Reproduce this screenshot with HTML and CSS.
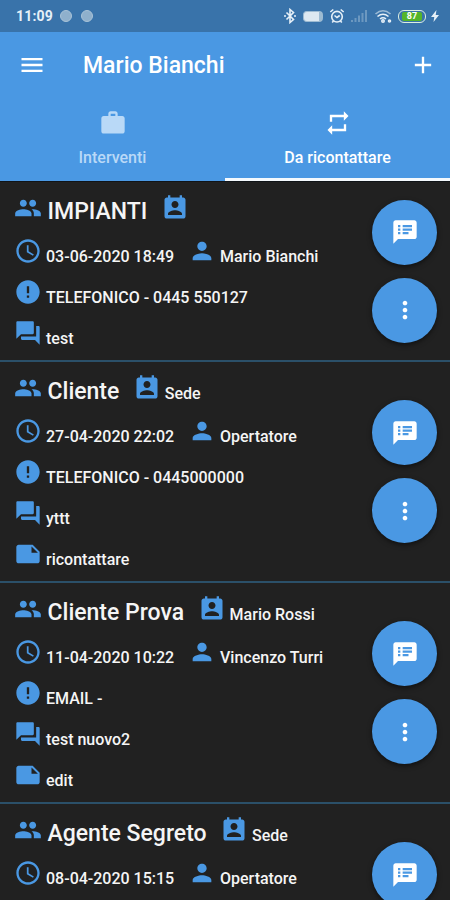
FILE: index.html
```html
<!DOCTYPE html>
<html lang="it">
<head>
    <meta charset="UTF-8">
    <meta name="viewport" content="width=device-width, initial-scale=1.0">
    <title>Da ricontattare</title>
    <link rel="stylesheet" href="styles.css">
</head>
<body>
    <svg class="sprite" aria-hidden="true">
        <symbol id="people" viewBox="0 0 24 24"><path d="M16 11c1.66 0 2.99-1.34 2.99-3S17.66 5 16 5c-1.66 0-3 1.34-3 3s1.34 3 3 3zm-8 0c1.66 0 2.99-1.34 2.99-3S9.66 5 8 5C6.34 5 5 6.34 5 8s1.34 3 3 3zm0 2c-2.33 0-7 1.17-7 3.5V19h14v-2.5c0-2.33-4.67-3.5-7-3.5zm8 0c-.29 0-.62.02-.97.05 1.16.84 1.97 1.97 1.97 3.45V19h6v-2.5c0-2.33-4.67-3.5-7-3.5z"/></symbol>
        <symbol id="contact" viewBox="0 0 24 24"><path d="M19 3h-1V1h-2v2H8V1H6v2H5c-1.11 0-2 .9-2 2v14c0 1.1.89 2 2 2h14c1.1 0 2-.9 2-2V5c0-1.1-.9-2-2-2zm-7 3c1.66 0 3 1.34 3 3s-1.34 3-3 3-3-1.34-3-3 1.34-3 3-3zm6 12H6v-1c0-2 4-3.1 6-3.1s6 1.1 6 3.1v1z"/></symbol>
        <symbol id="clock" viewBox="0 0 24 24"><path d="M11.99 2C6.47 2 2 6.48 2 12s4.47 10 9.99 10C17.52 22 22 17.52 22 12S17.52 2 11.99 2zM12 20c-4.42 0-8-3.58-8-8s3.58-8 8-8 8 3.58 8 8-3.58 8-8 8zm.5-13H11v6l5.25 3.15.75-1.23-4.5-2.67z"/></symbol>
        <symbol id="person" viewBox="0 0 24 24"><path d="M12 12c2.21 0 4-1.79 4-4s-1.79-4-4-4-4 1.79-4 4 1.79 4 4 4zm0 2c-2.67 0-8 1.34-8 4v2h16v-2c0-2.66-5.33-4-8-4z"/></symbol>
        <symbol id="error" viewBox="0 0 24 24"><path d="M12 2C6.48 2 2 6.48 2 12s4.48 10 10 10 10-4.48 10-10S17.52 2 12 2zm1 15h-2v-2h2v2zm0-4h-2V7h2v6z"/></symbol>
        <symbol id="forum" viewBox="0 0 24 24"><path d="M21 6h-2v9H6v2c0 .55.45 1 1 1h11l4 4V7c0-.55-.45-1-1-1zm-4 6V3c0-.55-.45-1-1-1H3c-.55 0-1 .45-1 1v14l4-4h10c.55 0 1-.45 1-1z"/></symbol>
        <symbol id="note" viewBox="0 0 24 24"><path d="M22 10l-6-6H4c-1.1 0-2 .9-2 2v12.01c0 1.1.9 1.99 2 1.99l16-.01c1.1 0 2-.89 2-1.99v-8zm-7-4.5l5.5 5.5H15V5.5z"/></symbol>
        <symbol id="speaker" viewBox="0 0 24 24"><path d="M20 2H4c-1.1 0-1.99.9-1.99 2L2 22l4-4h14c1.1 0 2-.9 2-2V4c0-1.1-.9-2-2-2zM8 14H6v-2h2v2zm0-3H6V9h2v2zm0-3H6V6h2v2zm7 6h-5v-2h5v2zm3-3h-8V9h8v2zm0-3h-8V6h8v2z"/></symbol>
        <symbol id="more" viewBox="0 0 24 24"><path d="M12 8c1.1 0 2-.9 2-2s-.9-2-2-2-2 .9-2 2 .9 2 2 2zm0 2c-1.1 0-2 .9-2 2s.9 2 2 2 2-.9 2-2-.9-2-2-2zm0 6c-1.1 0-2 .9-2 2s.9 2 2 2 2-.9 2-2-.9-2-2-2z"/></symbol>
        <symbol id="menu" viewBox="0 0 24 24"><path d="M3 18h18v-2H3v2zm0-5h18v-2H3v2zm0-7v2h18V6H3z"/></symbol>
        <symbol id="add" viewBox="0 0 24 24"><path d="M19 13h-6v6h-2v-6H5v-2h6V5h2v6h6v2z"/></symbol>
        <symbol id="work" viewBox="0 0 24 24"><path d="M20 6h-4V4c0-1.11-.89-2-2-2h-4c-1.11 0-2 .89-2 2v2H4c-1.11 0-1.99.89-1.99 2L2 19c0 1.11.89 2 2 2h16c1.11 0 2-.89 2-2V8c0-1.11-.89-2-2-2zm-6 0h-4V4h4v2z"/></symbol>
        <symbol id="repeat" viewBox="0 0 24 24"><path d="M7 7h10v3l4-4-4-4v3H5v6h2V7zm10 10H7v-3l-4 4 4 4v-3h12v-6h-2v4z"/></symbol>
    </svg>

    <div class="status-bar">
        <span class="time">11:09</span>
        <span class="dot"></span>
        <span class="dot"></span>
        <div class="status-icons">
            <svg class="bluetooth" width="12" height="16" viewBox="0 0 12 16"><path d="M2.500 4.500l7 7L6 14.500V1.500l3.500 3-7 7M0 8h2M10 8h2"/></svg>
            <span class="vibrate"></span>
            <svg class="alarm" width="16" height="16" viewBox="0 0 16 16"><circle cx="8" cy="8.700" r="5.300"/><path d="M1.300 4l3-2.500M14.700 4l-3-2.500M5.500 7.500L8 9.500l2.700-2M4.500 13l-1.300 1.500M11.500 13l1.300 1.500"/></svg>
            <svg class="signal" width="18" height="14" viewBox="0 0 18 14"><path d="M1 11h2v2H1zM4.500 9h2v4h-2zM8 6.500h2V13H8zM11.500 4h2v9h-2zM15 1h2v12h-2z"/></svg>
            <svg class="wifi" width="18" height="14" viewBox="0 0 18 14"><path class="faint" d="M1.500 5Q9-1.500 16.500 5"/><path d="M3.500 7.500Q9 3 14.500 7.500M6 10q3-2.500 6 0"/><circle cx="9" cy="12" r="1.200"/><circle cx="15.500" cy="12" r="1"/></svg>
            <span class="battery"><span>87</span></span>
            <svg class="bolt" width="8" height="12" viewBox="0 0 8 12"><path d="M5.500 0L0 7h3.300L2.500 12 8 5H4.700z"/></svg>
        </div>
    </div>

    <header>
        <div class="app-bar">
            <svg class="icon"><use href="#menu"/></svg>
            <h1>Mario Bianchi</h1>
            <svg class="icon"><use href="#add"/></svg>
        </div>
        <nav class="tabs">
            <div class="tab">
                <svg class="icon"><use href="#work"/></svg>
                <span>Interventi</span>
            </div>
            <div class="tab active">
                <svg class="icon"><use href="#repeat"/></svg>
                <span>Da ricontattare</span>
            </div>
        </nav>
    </header>

    <main>
        <div class="card">
            <div class="info">
                <div class="row title">
                    <svg class="icon"><use href="#people"/></svg><h2>IMPIANTI</h2>
                    <svg class="icon"><use href="#contact"/></svg>
                </div>
                <div class="row">
                    <svg class="icon"><use href="#clock"/></svg><span class="date">03-06-2020 18:49</span>
                    <svg class="icon"><use href="#person"/></svg><span>Mario Bianchi</span>
                </div>
                <div class="row"><svg class="icon"><use href="#error"/></svg><span>TELEFONICO - 0445 550127</span></div>
                <div class="row"><svg class="icon"><use href="#forum"/></svg><span>test</span></div>
            </div>
            <div class="actions">
                <button><svg class="icon"><use href="#speaker"/></svg></button>
                <button><svg class="icon"><use href="#more"/></svg></button>
            </div>
        </div>

        <div class="card">
            <div class="info">
                <div class="row title">
                    <svg class="icon"><use href="#people"/></svg><h2>Cliente</h2>
                    <svg class="icon"><use href="#contact"/></svg><span>Sede</span>
                </div>
                <div class="row">
                    <svg class="icon"><use href="#clock"/></svg><span class="date">27-04-2020 22:02</span>
                    <svg class="icon"><use href="#person"/></svg><span>Opertatore</span>
                </div>
                <div class="row"><svg class="icon"><use href="#error"/></svg><span>TELEFONICO - 0445000000</span></div>
                <div class="row"><svg class="icon"><use href="#forum"/></svg><span>yttt</span></div>
                <div class="row"><svg class="icon"><use href="#note"/></svg><span>ricontattare</span></div>
            </div>
            <div class="actions">
                <button><svg class="icon"><use href="#speaker"/></svg></button>
                <button><svg class="icon"><use href="#more"/></svg></button>
            </div>
        </div>

        <div class="card">
            <div class="info">
                <div class="row title">
                    <svg class="icon"><use href="#people"/></svg><h2>Cliente Prova</h2>
                    <svg class="icon"><use href="#contact"/></svg><span>Mario Rossi</span>
                </div>
                <div class="row">
                    <svg class="icon"><use href="#clock"/></svg><span class="date">11-04-2020 10:22</span>
                    <svg class="icon"><use href="#person"/></svg><span>Vincenzo Turri</span>
                </div>
                <div class="row"><svg class="icon"><use href="#error"/></svg><span>EMAIL -</span></div>
                <div class="row"><svg class="icon"><use href="#forum"/></svg><span>test nuovo2</span></div>
                <div class="row"><svg class="icon"><use href="#note"/></svg><span>edit</span></div>
            </div>
            <div class="actions">
                <button><svg class="icon"><use href="#speaker"/></svg></button>
                <button><svg class="icon"><use href="#more"/></svg></button>
            </div>
        </div>

        <div class="card last">
            <div class="info">
                <div class="row title">
                    <svg class="icon"><use href="#people"/></svg><h2>Agente Segreto</h2>
                    <svg class="icon"><use href="#contact"/></svg><span>Sede</span>
                </div>
                <div class="row">
                    <svg class="icon"><use href="#clock"/></svg><span class="date">08-04-2020 15:15</span>
                    <svg class="icon"><use href="#person"/></svg><span>Opertatore</span>
                </div>
            </div>
            <div class="actions">
                <button><svg class="icon"><use href="#speaker"/></svg></button>
            </div>
        </div>
    </main>
</body>
</html>
```

FILE: styles.css
```css
:root {
    --primary-color: #4a98e3;
    --status-color: #3973aa;
    --bg-color: #212121;
    --text-color: #f5f5f5;
    --line-color: #2b5069;
}

* {
    box-sizing: border-box;
}

body {
    font-family: Roboto, sans-serif;
    font-weight: 500;
    background-color: var(--bg-color);
    color: var(--text-color);
    margin: 0;
    height: 100vh;
    display: flex;
    flex-direction: column;
    overflow: hidden;
}

.sprite {
    display: none;
}

.icon {
    width: 28px;
    height: 28px;
    fill: currentColor;
    flex: none;
}

/* status bar */
.status-bar {
    flex: none;
    height: 32px;
    padding: 0 11px 0 16px;
    display: flex;
    align-items: center;
    background-color: var(--status-color);
    color: #e6f0f8;
}

.time {
    font-size: 14px;
    font-weight: 700;
    letter-spacing: 0.2px;
    width: 44px;
}

.dot {
    width: 12px;
    height: 12px;
    margin-right: 9px;
    border-radius: 50%;
    background-color: #8fb0cc;
    border: 1px solid #a9c3d8;
}

.status-icons {
    margin-left: auto;
    display: flex;
    align-items: center;
}

.status-icons svg {
    fill: none;
    stroke: #e6f0f8;
    stroke-width: 1.6;
}

.vibrate {
    width: 20px;
    height: 11px;
    margin: 0 6px 0 7px;
    border-radius: 4px;
    background-color: #dce8f1;
    border: 1px solid #9dbbd2;
    border-right-width: 4px;
}

.status-icons .signal {
    margin: 0 6px 0 5px;
    fill: #6c98c0;
    stroke: none;
}

.status-icons .wifi .faint {
    stroke: #9bbad5;
}

.battery {
    width: 28px;
    height: 13px;
    margin: 0 5px 0 6px;
    padding: 1px 3px;
    border: 1.5px solid #dceee0;
    border-radius: 6px;
    display: flex;
}

.battery span {
    flex: 1;
    border-radius: 2px;
    background-color: #54b52b;
    color: #fff;
    font-size: 9px;
    font-weight: 700;
    line-height: 9px;
    text-align: center;
}

.status-icons .bolt {
    fill: #e6f0f8;
    stroke: none;
}

/* header */
header {
    flex: none;
    height: 150px;
    background-color: var(--primary-color);
    color: #fff;
    border-bottom: 1px solid #101418;
}

.app-bar {
    height: 65px;
    padding: 0 13px 0 18px;
    display: flex;
    align-items: center;
}

h1 {
    flex: 1;
    margin: 2px 0 0 37px;
    font-size: 23px;
    font-weight: 500;
}

.tabs {
    display: flex;
    height: 84px;
}

.tab {
    flex: 1;
    display: flex;
    flex-direction: column;
    align-items: center;
    padding-top: 12px;
    border-bottom: 3px solid transparent;
    color: #b9d9f7;
    font-size: 16px;
}

.tab span {
    margin-top: 11px;
    line-height: 19px;
}

.tab.active {
    color: #fff;
    border-bottom-color: #f4f9fd;
}

/* list */
main {
    flex: 1;
    min-height: 0;
    overflow: hidden;
}

.card {
    display: flex;
    align-items: center;
    justify-content: space-between;
    padding: 3px 13px 7px 14px;
    border-bottom: 2px solid var(--line-color);
}

.row {
    display: flex;
    align-items: center;
    height: 41px;
    font-size: 16px;
    white-space: nowrap;
}

.row .icon {
    color: var(--primary-color);
}

.row span {
    margin-left: 4px;
    padding-top: 11px;
}

.row .date {
    width: 128px;
    margin-right: 14px;
}

.title {
    height: 45px;
}

h2 {
    margin: 0 13.5px 0 5.5px;
    padding-top: 7px;
    font-size: 23px;
    font-weight: 500;
}

.actions {
    display: flex;
    flex-direction: column;
    gap: 13px;
    padding-top: 4px;
}

button {
    flex: none;
    width: 65px;
    height: 65px;
    padding: 0;
    border: none;
    border-radius: 50%;
    background-color: var(--primary-color);
    color: #fff;
    display: flex;
    align-items: center;
    justify-content: center;
    box-shadow: 0 2px 5px rgba(0, 0, 0, 0.5);
}

/* cut off by the bottom of the screen */
.last {
    height: 97px;
    padding-bottom: 0;
    align-items: flex-start;
    border-bottom: none;
}

.last .actions {
    padding-top: 35px;
}
```
